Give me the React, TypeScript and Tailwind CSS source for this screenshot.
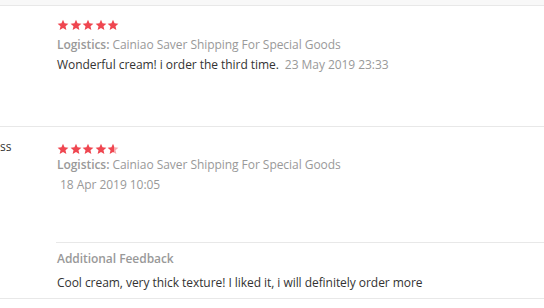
import React from "react";

const Star = ({ half = false }: { half?: boolean }) => (
  <svg width="12" height="12" viewBox="0 0 24 24" className="block">
    <defs>
      <linearGradient id="halfg">
        <stop offset="60%" stopColor="#ef4650" />
        <stop offset="60%" stopColor="#f7a9ad" />
      </linearGradient>
    </defs>
    <path
      d="M12 1.5l3.1 7.1 7.7.7-5.8 5.1 1.7 7.6L12 18l-6.7 4 1.7-7.6-5.8-5.1 7.7-.7z"
      fill={half ? "url(#halfg)" : "#ef4650"}
    />
  </svg>
);

const Stars = ({ half = false }: { half?: boolean }) => (
  <div className="flex gap-[0.5px] h-[14px] items-center">
    <Star />
    <Star />
    <Star />
    <Star />
    <Star half={half} />
  </div>
);

export default function App() {
  return (
    <div
      className="w-[544px] h-[308px] bg-white text-[12px] leading-[20px] text-[#333] overflow-hidden tracking-[-0.05px]"
      style={{ fontFamily: '"Open Sans", "Liberation Sans", sans-serif' }}
    >
      <div className="h-[5px] bg-[#f8f8f8]" />
      <div className="flex border-t border-[#e8e8e8] h-[121px]">
        <div className="w-[57px] shrink-0" />
        <div className="pt-[12px]">
          <Stars />
          <div className="mt-[3px] text-[#999]">
            <span className="font-semibold">Logistics:</span> Cainiao Saver Shipping For Special Goods
          </div>
          <div>
            Wonderful cream! i order the third time.
            <span className="text-[#999] ml-[6px]">23 May 2019 23:33</span>
          </div>
        </div>
      </div>
      <div className="flex border-t border-b border-[#e8e8e8] h-[173px]">
        <div className="w-[56px] shrink-0 pt-[10px]">ss</div>
        <div className="flex-1 flex flex-col">
          <div className="pl-[1px] pt-[15px] h-[115px]">
            <Stars half />
            <div className="mt-[-1px] text-[#999]">
              <span className="font-semibold">Logistics:</span> Cainiao Saver Shipping For Special Goods
            </div>
            <div className="text-[#999] pl-[3px]">18 Apr 2019 10:05</div>
          </div>
          <div className="border-t border-[#e8e8e8] pt-[6px] pl-[1px]">
            <div className="text-[#999] font-semibold">Additional Feedback</div>
            <div className="mt-[4px]">
              Cool cream, very thick texture! I liked it, i will definitely order more
            </div>
          </div>
        </div>
      </div>
    </div>
  );
}
